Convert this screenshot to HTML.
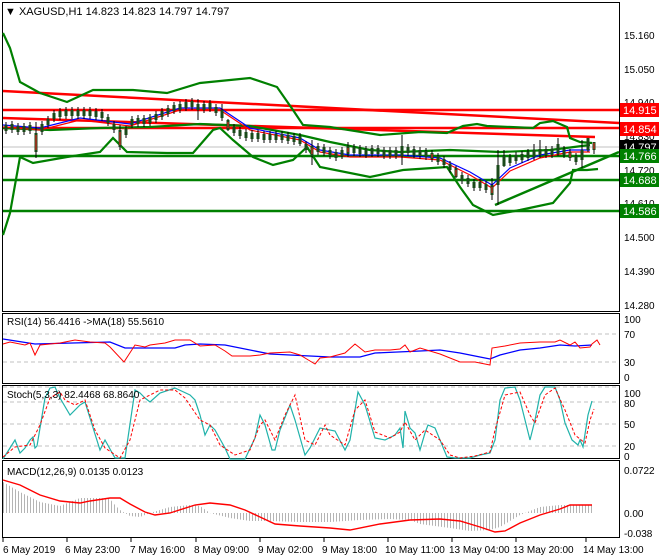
<!DOCTYPE html>
<html><head><meta charset="utf-8"><style>
html,body{margin:0;padding:0;background:#fff;}
svg{display:block;font-family:"Liberation Sans",sans-serif;}
</style></head><body>
<svg width="660" height="560" viewBox="0 0 660 560" xmlns="http://www.w3.org/2000/svg">
<defs>
<pattern id="bars" x="0" y="0" width="3" height="10" patternUnits="userSpaceOnUse"><rect x="0" y="0" width="1" height="10" fill="#b4b4b4"/></pattern>
</defs>
<rect width="660" height="560" fill="#fff"/>
<g fill="none" stroke="#000" stroke-width="1">
<rect x="2.5" y="2.5" width="617" height="309"/>
<rect x="2.5" y="313.5" width="617" height="70"/>
<rect x="2.5" y="385.5" width="617" height="73"/>
<rect x="2.5" y="460.5" width="617" height="77"/>
</g>
<!-- MAIN -->
<line x1="3" y1="147" x2="619" y2="147" stroke="#c0c0c0"/>
<g stroke="#008000" stroke-width="2.5">
<line x1="3" y1="156" x2="619" y2="156"/>
<line x1="3" y1="180" x2="619" y2="180"/>
<line x1="3" y1="211" x2="619" y2="211"/>
<line x1="495" y1="205" x2="619" y2="152"/>
</g>
<g stroke="#ff0000" stroke-width="2.5">
<line x1="3" y1="91" x2="619" y2="123"/>
<line x1="3" y1="110" x2="619" y2="110"/>
<line x1="3" y1="118" x2="595" y2="137"/>
<line x1="3" y1="128" x2="619" y2="128"/>
</g>
<g fill="none" stroke="#008000" stroke-width="2.2">
<polyline points="3,33 10,48 20,82 40,93 67,102 93,90 133,90 167,93 200,83 250,78 277,87 293,110 303,125 330,127 380,135 420,132 447,133 463,126 477,124 487,126 533,128 540,123 553,121 567,127 570,138 580,142 592,143"/>
<polyline points="3,128 50,130 100,128 150,127 200,124 250,126 300,135 330,142 370,150 400,152 450,150 500,152 550,150 590,145"/>
<polyline points="3,235 10,213 20,157 33,163 67,157 100,152 113,138 127,152 167,153 193,153 213,130 220,128 233,140 253,157 273,165 293,160 307,147 320,167 370,177 403,170 447,167 460,187 473,205 493,215 520,210 553,203 570,183 573,170 587,170 598,169"/>
</g>
<polyline fill="none" stroke="#0000ff" stroke-width="1.2" points="3,125 40,128 80,118 130,124 180,108 220,108 250,128 300,138 320,150 350,155 400,155 440,158 470,172 492,185 510,168 540,155 570,150 590,150"/>
<polyline fill="none" stroke="#ff0000" stroke-width="1.2" points="3,127 40,130 80,120 130,126 180,110 220,110 250,130 300,140 320,152 350,157 400,157 440,160 470,175 492,188 510,171 540,158 570,152 590,152"/>
<!-- candles -->
<path fill="none" stroke="#000" stroke-width="1" d="M6 122V134M12 121V133M18 123V135M24 123V135M30 122V134M36 122V158M42 121V135M48 116V128M54 110V122M60 108V120M66 107V119M72 107V119M78 107V119M84 107V119M90 107V119M96 108V120M102 109V121M108 114V126M114 121V133M120 125V150M126 126V138M132 116V128M138 115V127M144 115V127M150 114V126M156 111V123M162 108V120M168 105V117M174 102V114M180 101V113M186 99V111M192 98V110M198 99V120M204 101V113M210 100V112M216 104V116M222 104V121M228 119V131M234 124V136M240 127V139M246 129V141M252 130V142M258 130V142M264 131V143M270 131V143M276 131V143M282 131V143M288 132V144M294 133V145M300 133V146M306 141V153M312 140V165M318 143V155M324 144V156M330 147V159M336 149V161M342 147V159M348 142V157M354 144V156M360 145V157M366 146V158M372 145V157M378 145V157M384 147V159M390 147V159M396 147V159M402 135V165M408 144V156M414 146V158M420 147V159M426 148V160M432 150V162M438 153V165M444 156V168M450 161V173M456 166V178M462 172V184M468 175V187M474 179V191M480 179V191M486 181V193M492 178V200M498 150V205M504 150V167M510 154V166M516 152V164M522 151V163M528 149V161M534 144V160M540 140V158M546 146V158M552 146V158M558 138V156M564 146V158M570 149V161M576 153V165M582 140V168M588 138V152M594 142V154"/>
<path fill="none" stroke="#1a4a1a" stroke-width="3" d="M6 125V131M12 124V130M18 126V132M24 126V132M30 125V131M36 133V152M42 124V132M48 119V125M54 113V119M60 111V117M66 110V116M72 110V116M78 110V116M84 110V116M90 110V116M96 111V117M102 112V118M108 117V123M114 124V130M120 130V147M126 129V135M132 119V125M138 118V124M144 118V124M150 117V123M156 114V120M162 111V117M168 108V114M174 105V111M180 104V110M186 102V108M192 101V107M198 104V110M204 104V110M210 103V109M216 107V113M222 110V118M228 120V130M234 127V133M240 130V136M246 132V138M252 133V139M258 133V139M264 134V140M270 134V140M276 134V140M282 134V140M288 135V141M294 136V142M300 136V144M306 144V150M312 146V156M318 146V152M324 147V153M330 150V156M336 152V158M342 150V156M348 146V154M354 147V153M360 148V154M366 149V155M372 148V154M378 148V154M384 150V156M390 150V156M396 150V156M402 146V156M408 147V153M414 149V155M420 150V156M426 151V157M432 153V159M438 156V162M444 159V165M450 164V170M456 168V177M462 175V181M468 178V184M474 182V188M480 182V188M486 184V190M492 185V195M498 165V185M504 156V166M510 157V163M516 155V161M522 154V160M528 152V158M534 150V157M540 149V155M546 149V155M552 149V155M558 144V154M564 149V155M570 152V158M576 156V162M582 150V160M588 138V150M594 142V150"/>
<path fill="none" stroke="#ff2020" stroke-width="1" d="M36 135V150M120 132V145M228 122V128M312 148V154M456 170V176M492 187V193M570 153V157M594 143V149M348 148V152M432 154V158"/>
<text x="5" y="15" font-size="11" fill="#000">▼ XAGUSD,H1  14.823 14.823 14.797 14.797</text>
<g font-size="10" fill="#000">
<text x="624" y="39">15.160</text><text x="624" y="73">15.050</text><text x="624" y="106">14.940</text>
<text x="624" y="140">14.830</text><text x="624" y="174">14.720</text><text x="624" y="207">14.610</text>
<text x="624" y="241">14.500</text><text x="624" y="275">14.390</text><text x="624" y="309">14.280</text>
</g>
<rect x="620" y="103" width="39" height="14" fill="#ff0000"/><text x="623" y="114" font-size="11" fill="#fff">14.915</text>
<rect x="620" y="122" width="39" height="14" fill="#ff0000"/><text x="623" y="133" font-size="11" fill="#fff">14.854</text>
<rect x="620" y="140" width="39" height="14" fill="#000"/><text x="623" y="151" font-size="11" fill="#fff">14.797</text>
<rect x="620" y="149" width="39" height="14" fill="#008000"/><text x="623" y="160" font-size="11" fill="#fff">14.766</text>
<rect x="620" y="173" width="39" height="14" fill="#008000"/><text x="623" y="184" font-size="11" fill="#fff">14.688</text>
<rect x="620" y="204" width="39" height="14" fill="#008000"/><text x="623" y="215" font-size="11" fill="#fff">14.586</text>
<!-- dashed levels -->
<g stroke="#c0c0c0" stroke-dasharray="4,3"><line x1="3" y1="334" x2="619" y2="334"/><line x1="3" y1="362" x2="619" y2="362"/>
<line x1="3" y1="402" x2="619" y2="402"/><line x1="3" y1="424" x2="619" y2="424"/><line x1="3" y1="446" x2="619" y2="446"/><line x1="3" y1="387" x2="619" y2="387"/></g>
<!-- RSI -->
<polyline fill="none" stroke="#0000ff" stroke-width="1.3" points="3,339 35,344 110,342 125,348 175,348 185,345 200,344 225,345 270,354 330,357 360,357 375,353 420,351 440,350 460,353 480,357 490,359 500,355 520,350 540,348 560,345 575,346 592,345"/>
<polyline fill="none" stroke="#ff0000" stroke-width="1" points="3,344 10,342 25,345 30,343 35,355 40,345 60,343 75,340 90,342 105,343 110,347 124,362 135,345 145,347 150,345 165,343 175,340 190,340 200,346 215,345 225,351 232,356 250,356 260,355 270,353 290,352 300,355 310,361 315,364 320,358 330,357 345,353 355,344 365,352 375,350 390,350 400,349 405,345 410,352 420,348 440,354 460,362 475,362 490,365 492,348 505,346 520,343 540,342 555,342 560,340 570,345 575,342 580,348 590,347 592,344 597,340 600,345"/>
<text x="7" y="325" font-size="10" fill="#000">RSI(14) 56.4416  -&gt;MA(18) 55.5610</text>
<g font-size="10" fill="#000"><text x="624" y="323">100</text><text x="624" y="338">70</text><text x="624" y="366">30</text><text x="624" y="381">0</text>
<text x="624" y="397">100</text><text x="624" y="407">80</text><text x="624" y="428">50</text><text x="624" y="450">20</text><text x="624" y="460">0</text>
<text x="624" y="474">0.0722</text><text x="624" y="517">0.00</text><text x="624" y="537">-0.038</text></g>
<!-- Stoch -->
<polyline fill="none" stroke="#20b2aa" stroke-width="1.2" points="3,459 10,448 15,440 20,453 25,448 30,440 33,437 35,448 37,446 45,398 50,388 55,387 60,398 70,415 80,405 85,402 90,418 100,450 105,440 115,458 125,458 135,390 140,393 145,398 150,402 160,393 175,388 190,395 195,400 200,415 205,435 210,425 215,430 225,448 230,459 245,459 255,438 260,415 265,425 272,450 275,450 280,430 290,405 295,420 305,455 310,448 320,428 335,431 345,450 350,440 358,392 365,405 375,438 385,440 395,435 400,428 403,448 405,411 410,428 415,433 420,450 425,433 428,425 435,428 440,440 447,457 455,458 470,458 480,455 490,453 495,440 500,400 505,388 515,387 520,400 530,440 535,420 540,395 545,387 555,387 560,400 565,423 572,440 578,445 580,440 583,447 588,415 592,401"/>
<polyline fill="none" stroke="#ff0000" stroke-width="1" stroke-dasharray="3,2" points="3,457 15,447 30,445 40,425 50,398 60,392 65,400 75,405 85,400 95,430 105,448 120,458 130,440 140,400 160,390 175,390 185,398 200,420 210,425 220,445 235,455 250,450 260,425 265,420 275,440 285,415 295,395 305,440 315,445 325,425 330,435 345,445 355,410 365,400 375,432 390,438 400,432 405,422 415,440 425,430 440,440 450,455 460,458 475,456 490,452 495,430 505,395 520,392 530,415 535,423 545,395 555,388 565,410 575,435 585,443 590,420 594,409"/>
<text x="7" y="398" font-size="10" fill="#000">Stoch(5,3,3) 82.4468 68.8640</text>
<!-- MACD -->
<path fill="url(#bars)" d="M3,513 L3,482 20,492 40,502 60,506 80,498 100,498 110,499 115,505 120,510 125,513 130,516 140,517 150,513 170,507 190,505 200,506 210,513 230,518 250,521 270,521 300,522 330,522 360,520 390,519 410,520 420,524 450,528 470,531 490,530 500,527 510,521 520,515 525,513 540,507 560,505 592,505 592,513 Z"/>
<polyline fill="none" stroke="#ff0000" stroke-width="1.4" points="3,480 20,485 40,495 60,501 80,503 90,501 110,498 120,498 130,504 145,512 155,515 170,513 195,505 210,503 230,505 245,510 260,517 275,524 300,526 330,528 350,530 380,524 410,520 440,519 460,521 480,527 495,532 505,531 520,523 540,515 560,509 570,505 592,505"/>
<text x="7" y="475" font-size="10" fill="#000">MACD(12,26,9) 0.0135 0.0123</text>
<!-- time axis -->
<g font-size="10" fill="#000">
<text x="3" y="553">6 May 2019</text><text x="65" y="553">6 May 23:00</text><text x="130" y="553">7 May 16:00</text>
<text x="194" y="553">8 May 09:00</text><text x="258" y="553">9 May 02:00</text><text x="322" y="553">9 May 18:00</text>
<text x="385" y="553">10 May 11:00</text><text x="449" y="553">13 May 04:00</text><text x="513" y="553">13 May 20:00</text>
<text x="583" y="553">14 May 13:00</text></g>
<g stroke="#000"><line x1="3" y1="538" x2="3" y2="542"/><line x1="67" y1="538" x2="67" y2="542"/><line x1="131" y1="538" x2="131" y2="542"/><line x1="196" y1="538" x2="196" y2="542"/><line x1="260" y1="538" x2="260" y2="542"/><line x1="324" y1="538" x2="324" y2="542"/><line x1="388" y1="538" x2="388" y2="542"/><line x1="452" y1="538" x2="452" y2="542"/><line x1="516" y1="538" x2="516" y2="542"/><line x1="586" y1="538" x2="586" y2="542"/></g>
</svg>
</body></html>
